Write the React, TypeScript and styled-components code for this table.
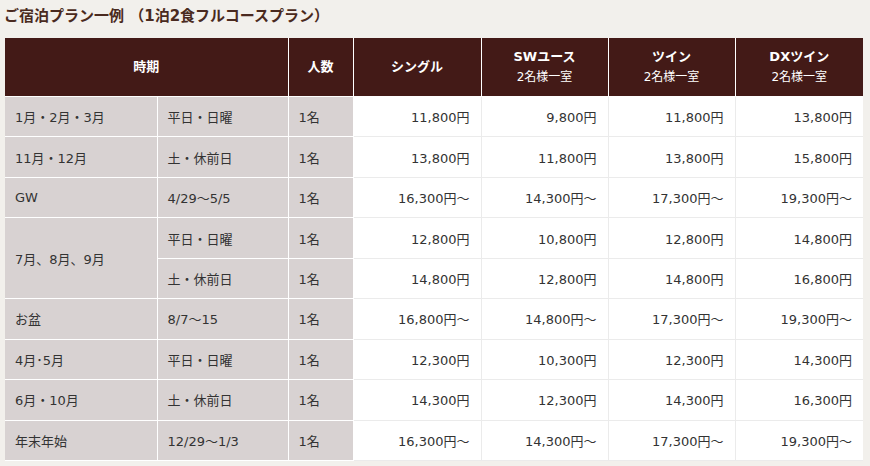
import React from 'react';
import styled, {createGlobalStyle} from 'styled-components';

const GlobalStyle = createGlobalStyle`
  html, body {
    margin: 0;
    padding: 0;
    background-color: #f2f0ec;
    font-family: "DejaVu Sans", "Noto Sans CJK JP", sans-serif;
    color: #333;
  }
`;

const Page = styled.div`
  width: 870px;
  height: 466px;
  padding: 0 0 0 5px;
  box-sizing: border-box;
  overflow: hidden;
`;

const Title = styled.h2`
  margin: 0;
  margin-left: -1px;
  height: 38px;
  line-height: 33px;
  font-size: 15px;
  font-weight: bold;
  color: #4a2a20;
`;

const Table = styled.table`
  width: 858px;
  border-collapse: collapse;
  table-layout: fixed;
  font-size: 13px;
`;

const Th = styled.th`
  height: 58px;
  padding: 0;
  background-color: #431a17;
  color: #fff;
  font-size: 13px;
  font-weight: bold;
  text-align: center;
  vertical-align: middle;
  border: 1px solid #fff;
  border-top: none;
  line-height: 20px;

  &:first-child {
    border-left: none;
  }

  &:last-child {
    border-right: none;
  }
`;

const Sub = styled.span`
  display: block;
  font-weight: normal;
  font-size: 12px;
`;

const Label = styled.td`
  height: 39.45px;
  padding: 0 0 0 10px;
  background-color: #d8d2d2;
  color: #333;
  border: 1px solid #fff;
  vertical-align: middle;
  white-space: nowrap;

  &:first-child {
    border-left: none;
  }
`;

const Price = styled.td`
  height: 39.45px;
  padding: 0 11px 0 0;
  background-color: #fff;
  color: #333;
  text-align: right;
  border: 1px solid #ebebeb;
  vertical-align: middle;
  white-space: nowrap;

  &:last-child {
    border-right: none;
  }
`;

type Row = {
  period?: string;
  span?: number;
  days: string;
  prices: string[];
};

const rows: Row[] = [
  {period: '1月・2月・3月', days: '平日・日曜', prices: ['11,800円', '9,800円', '11,800円', '13,800円']},
  {period: '11月・12月', days: '土・休前日', prices: ['13,800円', '11,800円', '13,800円', '15,800円']},
  {period: 'GW', days: '4/29～5/5', prices: ['16,300円～', '14,300円～', '17,300円～', '19,300円～']},
  {period: '7月、8月、9月', span: 2, days: '平日・日曜', prices: ['12,800円', '10,800円', '12,800円', '14,800円']},
  {days: '土・休前日', prices: ['14,800円', '12,800円', '14,800円', '16,800円']},
  {period: 'お盆', days: '8/7～15', prices: ['16,800円～', '14,800円～', '17,300円～', '19,300円～']},
  {period: '4月･5月', days: '平日・日曜', prices: ['12,300円', '10,300円', '12,300円', '14,300円']},
  {period: '6月・10月', days: '土・休前日', prices: ['14,300円', '12,300円', '14,300円', '16,300円']},
  {period: '年末年始', days: '12/29～1/3', prices: ['16,300円～', '14,300円～', '17,300円～', '19,300円～']},
];

function App() {
  return (
    <Page>
      <GlobalStyle/>
      <Title>ご宿泊プラン一例 （1泊2食フルコースプラン）</Title>
      <Table>
        <colgroup>
          <col style={{width: 152}}/>
          <col style={{width: 131}}/>
          <col style={{width: 65}}/>
          <col style={{width: 128}}/>
          <col style={{width: 127}}/>
          <col style={{width: 127}}/>
          <col style={{width: 128}}/>
        </colgroup>
        <thead>
          <tr>
            <Th colSpan={2}>時期</Th>
            <Th>人数</Th>
            <Th>シングル</Th>
            <Th>SWユース<Sub>2名様一室</Sub></Th>
            <Th>ツイン<Sub>2名様一室</Sub></Th>
            <Th>DXツイン<Sub>2名様一室</Sub></Th>
          </tr>
        </thead>
        <tbody>
          {rows.map((r, i) =>
            <tr key={i}>
              {r.period && <Label rowSpan={r.span || 1}>{r.period}</Label>}
              <Label>{r.days}</Label>
              <Label>1名</Label>
              {r.prices.map((p, j) => <Price key={j}>{p}</Price>)}
            </tr>
          )}
        </tbody>
      </Table>
    </Page>
  );
}

export default App;
